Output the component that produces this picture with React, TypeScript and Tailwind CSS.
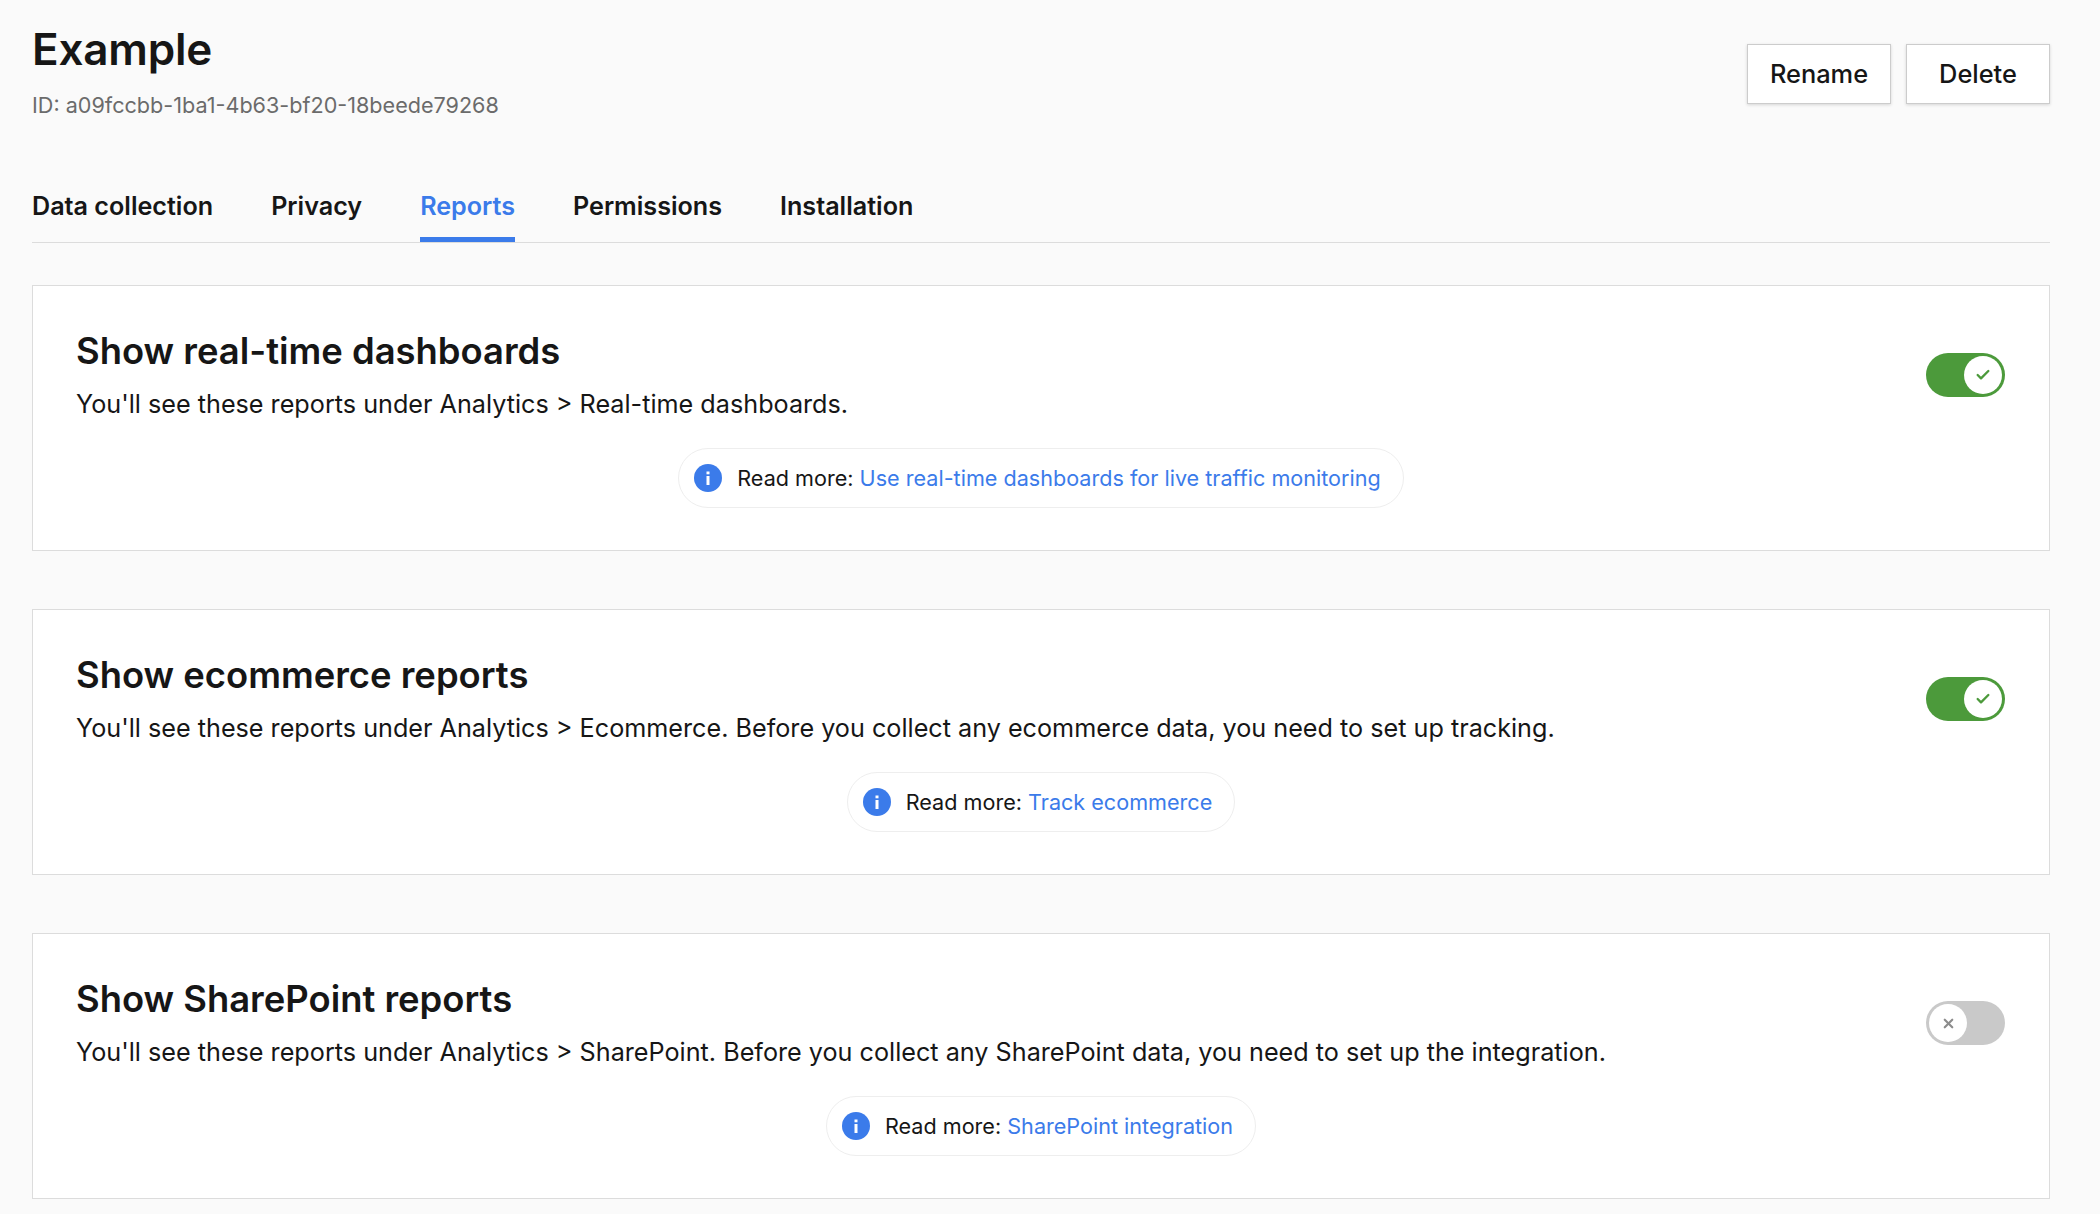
import React from 'react';
import { Check, X } from 'lucide-react';

const tabs = ['Data collection', 'Privacy', 'Reports', 'Permissions', 'Installation'];

const sections = [
  {
    title: 'Show real-time dashboards',
    text: "You'll see these reports under Analytics > Real-time dashboards.",
    link: 'Use real-time dashboards for live traffic monitoring',
    on: true,
  },
  {
    title: 'Show ecommerce reports',
    text: "You'll see these reports under Analytics > Ecommerce. Before you collect any ecommerce data, you need to set up tracking.",
    link: 'Track ecommerce',
    on: true,
  },
  {
    title: 'Show SharePoint reports',
    text: "You'll see these reports under Analytics > SharePoint. Before you collect any SharePoint data, you need to set up the integration.",
    link: 'SharePoint integration',
    on: false,
  },
];

const Toggle = ({ on }: { on: boolean }) => (
  <div
    className={`flex h-[44px] w-[79px] items-center rounded-full px-[3px] ${
      on ? 'justify-end bg-[#4c9a3b]' : 'justify-start bg-[#c9c9c9]'
    }`}
  >
    <div className="flex h-[38px] w-[38px] items-center justify-center rounded-full bg-white">
      {on ? (
        <Check className="h-[16px] w-[16px] text-[#4c9a3b]" strokeWidth={3.5} />
      ) : (
        <X className="h-[15px] w-[15px] text-[#8c8c8c]" strokeWidth={3.5} />
      )}
    </div>
  </div>
);

const InfoIcon = () => (
  <svg viewBox="0 0 28 28" className="h-[28px] w-[28px] shrink-0">
    <circle cx="14" cy="14" r="14" fill="#3b7bea" />
    <rect x="12.5" y="12" width="3" height="9" fill="#fff" />
    <rect x="12.5" y="7.5" width="3" height="2.8" fill="#fff" />
  </svg>
);

const App: React.FC = () => {
  return (
    <div className="min-h-[1214px] bg-[#fafafa] pl-[32px] pr-[50px] font-['Inter',sans-serif] text-[#161616]">
      <div className="flex items-start justify-between">
        <div>
          <h1 className="pt-[22px] text-[44px] leading-[54px] font-semibold tracking-[-0.2px]">Example</h1>
          <div className="mt-[14px] text-[21.6px] leading-[30px] text-[#6b6b6b]">
            ID: a09fccbb-1ba1-4b63-bf20-18beede79268
          </div>
        </div>
        <div className="mt-[44px] flex gap-[15px]">
          <button className="h-[60px] w-[144px] border border-[#cccccc] bg-white text-[25.4px] font-medium shadow-[0_1px_3px_rgba(0,0,0,0.15)]">
            Rename
          </button>
          <button className="h-[60px] w-[144px] border border-[#cccccc] bg-white text-[25.4px] font-medium shadow-[0_1px_3px_rgba(0,0,0,0.15)]">
            Delete
          </button>
        </div>
      </div>

      <div className="mt-[58px] flex gap-[58px] border-b border-[#dcdcdc]">
        {tabs.map((t) => (
          <div
            key={t}
            className={`h-[64px] border-b-[5px] pt-[10px] text-[25.15px] leading-[36px] font-semibold ${
              t === 'Reports' ? 'border-[#3b7bea] text-[#3b7bea]' : 'border-transparent'
            }`}
          >
            {t}
          </div>
        ))}
      </div>

      <div className="mt-[42px] flex flex-col gap-[58px]">
        {sections.map((s) => (
          <div key={s.title} className="h-[266px] border border-[#dcdcdc] bg-white px-[43px] pt-[41px]">
            <div className="flex items-start justify-between">
              <div>
                <h2 className="text-[36.4px] leading-[48px] font-semibold">{s.title}</h2>
                <p className="mt-[11px] text-[25.2px] leading-[36px]">{s.text}</p>
              </div>
              <div className="mt-[26px] mr-[1px] shrink-0">
                <Toggle on={s.on} />
              </div>
            </div>
            <div className="mt-[26px] flex justify-center">
              <div className="flex h-[60px] items-center gap-[15px] rounded-full border border-[#eeeeee] pl-[15px] pr-[22px] text-[21.6px]">
                <InfoIcon />
                <span>
                  Read more: <span className="text-[#3b7bea]">{s.link}</span>
                </span>
              </div>
            </div>
          </div>
        ))}
      </div>
    </div>
  );
};

export default App;
